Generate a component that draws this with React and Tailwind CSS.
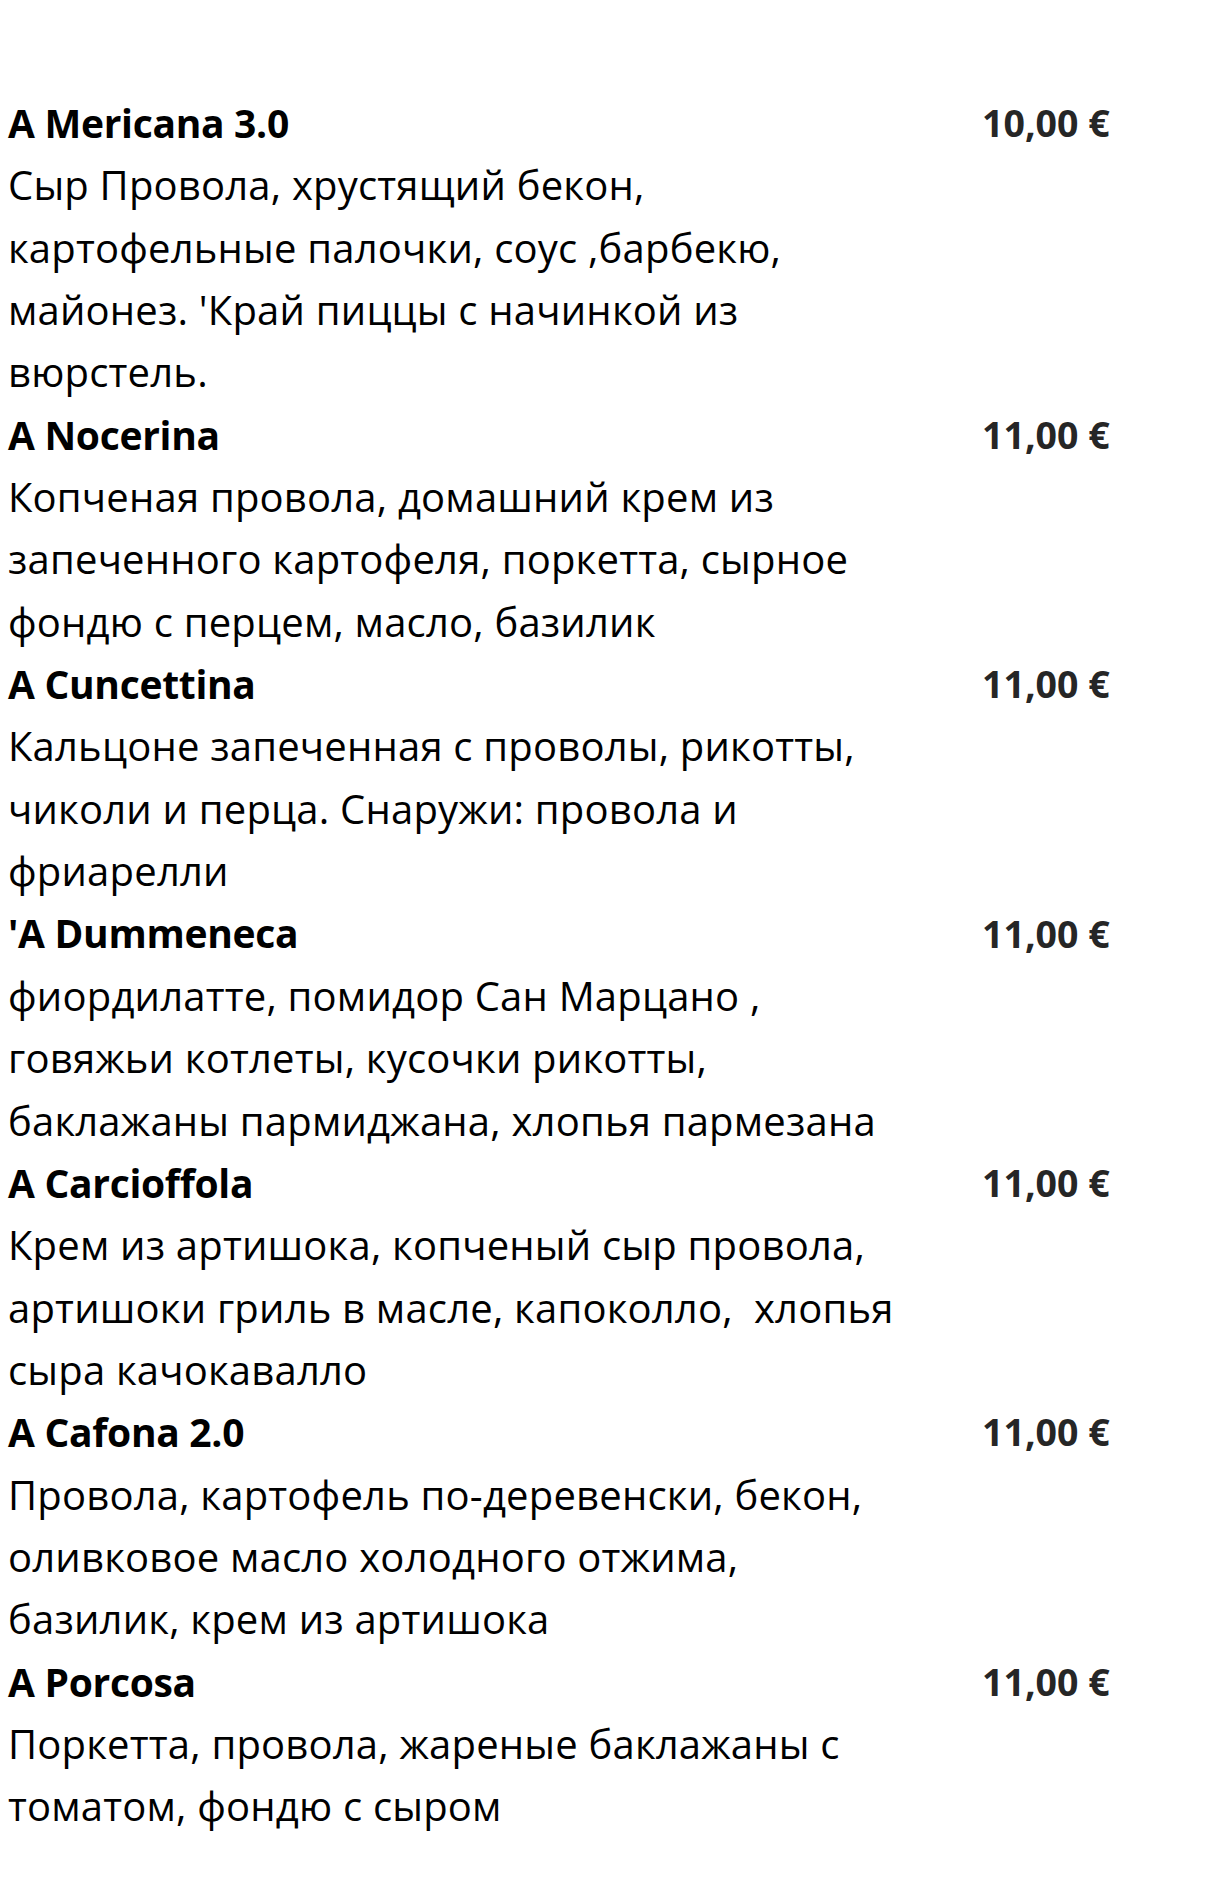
import React from "react";

const items = [
  {
    name: "A Mericana 3.0",
    price: "10,00 €",
    lines: [
      "Сыр Провола, хрустящий бекон,",
      "картофельные палочки, соус ,барбекю,",
      "майонез. 'Край пиццы с начинкой из",
      "вюрстель.",
    ],
  },
  {
    name: "A Nocerina",
    price: "11,00 €",
    lines: [
      "Копченая провола, домашний крем из",
      "запеченного картофеля, поркетта, сырное",
      "фондю с перцем, масло, базилик",
    ],
  },
  {
    name: "A Cuncettina",
    price: "11,00 €",
    lines: [
      "Кальцоне запеченная с проволы, рикотты,",
      "чиколи и перца. Снаружи: провола и",
      "фриарелли",
    ],
  },
  {
    name: "'A Dummeneca",
    price: "11,00 €",
    lines: [
      "фиордилатте, помидор Сан Марцано ,",
      "говяжьи котлеты, кусочки рикотты,",
      "баклажаны пармиджана, хлопья пармезана",
    ],
  },
  {
    name: "A Carcioffola",
    price: "11,00 €",
    lines: [
      "Крем из артишока, копченый сыр провола,",
      "артишоки гриль в масле, капоколло,  хлопья",
      "сыра качокавалло",
    ],
  },
  {
    name: "A Cafona 2.0",
    price: "11,00 €",
    lines: [
      "Провола, картофель по-деревенски, бекон,",
      "оливковое масло холодного отжима,",
      "базилик, крем из артишока",
    ],
  },
  {
    name: "A Porcosa",
    price: "11,00 €",
    lines: [
      "Поркетта, провола, жареные баклажаны с",
      "томатом, фондю с сыром",
    ],
  },
];

const MenuItem = ({ item }) => (
  <div className="flex flex-col">
    <div className="flex h-[62.35px] items-center">
      <h2 className="w-[974px] shrink-0 text-[39px] font-bold tracking-[-0.3px] text-black">
        {item.name}
      </h2>
      <span className="text-[37.5px] font-bold text-[#262626]">
        {item.price}
      </span>
    </div>
    {item.lines.map((line, i) => (
      <p
        key={i}
        className="h-[62.35px] whitespace-pre text-[40px] leading-[62.35px] tracking-[0.2px] text-black"
      >
        {line}
      </p>
    ))}
  </div>
);

export default function App() {
  return (
    <div className="min-h-[1889px] w-[1212px] bg-white pl-[8px] pt-[92px] font-['Open_Sans',sans-serif]">
      {items.map((item) => (
        <MenuItem key={item.name} item={item} />
      ))}
    </div>
  );
}
